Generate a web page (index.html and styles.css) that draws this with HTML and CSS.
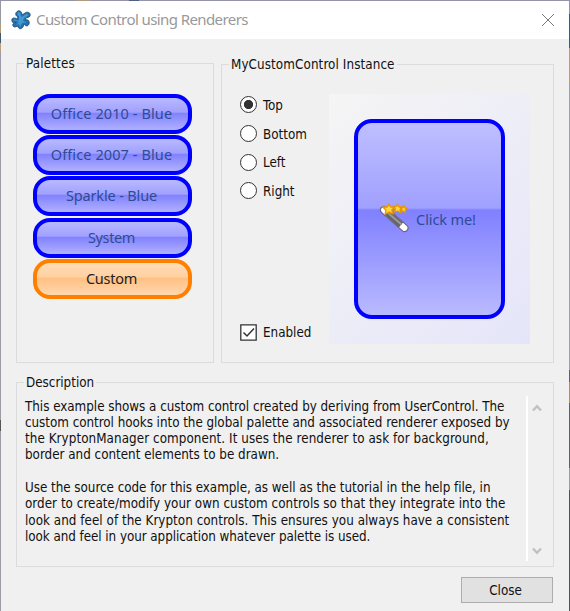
FILE: index.html
```html
<!DOCTYPE html>
<html lang="en">
<head>
<meta charset="utf-8">
<title>Custom Control using Renderers</title>
<link rel="stylesheet" href="styles.css">
</head>
<body>
<div class="desktop">
<main class="window">
  <header class="titlebar">
    <svg class="logo" width="22" height="22" viewBox="0 0 22 22">
      <g transform="translate(1 1)" fill="#2472ae" stroke="#1c4a72" stroke-width=".8" stroke-linejoin="round">
        <path d="M1 11C0 8 3 7 6 9L7 7C4 6 4 2 7 1C10 0 11 3 11 5L14 3C17 1 20 3 19 6C18 8 16 7 15 8L14 10C17 9 19 11 18 14C17 17 14 16 13 14L12 17C10 20 7 19 7 16L4 17C1 17 1 13 4 13L5 12C3 13 1 13 1 11Z"/>
        <path d="M2 10C4 8 6 12 8 10L8 6C6 5 6 2 8 2C10 3 9 6 11 7L15 4L18 5L13 8L12 11L16 12L11 13L9 17L8 14L5 15L8 12Z" fill="#4399d3" stroke="none"/>
      </g>
    </svg>
    <h1 class="title">Custom Control using Renderers</h1>
    <svg class="close-icon" width="14" height="14" viewBox="0 0 14 14"><path d="M1 1L13 13M13 1L1 13" fill="none" stroke="#777" stroke-width="1"/></svg>
  </header>
  <div class="content">
    <div class="top-row">
      <section class="group palettes">
        <h2 class="legend l-pal">Palettes</h2>
        <div class="palette-list">
          <button class="glossy p1"><span>Office 2010 - Blue</span></button>
          <button class="glossy p1"><span>Office 2007 - Blue</span></button>
          <button class="glossy p2"><span>Sparkle - Blue</span></button>
          <button class="glossy p3"><span>System</span></button>
          <button class="glossy orange"><span>Custom</span></button>
        </div>
      </section>
      <section class="group instance">
        <h2 class="legend l-inst">MyCustomControl Instance</h2>
        <div class="instance-body">
          <div class="options">
            <div class="option"><i class="radio on"></i><span>Top</span></div>
            <div class="option"><i class="radio"></i><span>Bottom</span></div>
            <div class="option"><i class="radio"></i><span>Left</span></div>
            <div class="option"><i class="radio"></i><span>Right</span></div>
            <div class="option enabled">
              <svg width="17" height="17" viewBox="0 0 17 17"><path d="M.8 .8H16.2V16.2H.8Z" fill="#fff" stroke="#333" stroke-width="1.3"/><path d="M3.5 8.5L7 12L14 4.5" fill="none" stroke="#333" stroke-width="1.5"/></svg>
              <span>Enabled</span>
            </div>
          </div>
          <div class="stage">
            <button class="glossy big">
              <svg width="32" height="32" viewBox="0 0 32 32">
                <path d="M5 7L25.500 25" stroke="#66667a" stroke-width="8" stroke-linecap="round"/>
                <path d="M5 7L25.500 25" stroke="#fff" stroke-width="5.800" stroke-linecap="round"/>
                <path d="M8 9.600L22 22" stroke="#666" stroke-width="6.400"/>
                <path d="M8.500 9.500L22.500 21.500" stroke="#999" stroke-width="2"/>
                <g fill="#ffd83c" stroke="#e99500" stroke-width="1.300" stroke-linejoin="round">
                  <path d="M10 1L11.700 4L15.500 4.200L12.800 7L14 11L10 9L6 11.300L7 7.200L4 4L8.300 4Z"/>
                  <path d="M18.500 1L20 4L23.500 4L21 6.500L22 10L18.500 8L15.500 9L16.300 6L14 3.500L17.300 3.500Z"/>
                  <path d="M25 2.500L26 5L28.500 5.500L26.500 7L26.500 9.300L24 8L22 8.500L23 6.300L21.500 4.300L24 4.500Z"/>
                </g>
              </svg>
              <span>Click me!</span>
            </button>
          </div>
        </div>
      </section>
    </div>
    <section class="group description">
      <h2 class="legend l-desc">Description</h2>
      <div class="desc-body">
        <div class="prose">
          <p><span class="d1">This example shows a custom control created by deriving from UserControl. The</span><br><span class="d2">custom control hooks into the global palette and associated renderer exposed by</span><br><span class="d3">the KryptonManager component. It uses the renderer to ask for background,</span><br><span class="d4">border and content elements to be drawn.</span></p>
          <p><span class="d5">Use the source code for this example, as well as the tutorial in the help file, in</span><br><span class="d6">order to create/modify your own custom controls so that they integrate into the</span><br><span class="d7">look and feel of the Krypton controls. This ensures you always have a consistent</span><br><span class="d8">look and feel in your application whatever palette is used.</span></p>
        </div>
        <div class="scrollbar">
          <svg width="10" height="8" viewBox="0 0 10 8"><path d="M1 6.500L5 2.200L9 6.500" fill="none" stroke="#c0c0c0" stroke-width="2.400"/></svg>
          <svg width="10" height="8" viewBox="0 0 10 8"><path d="M1 1.500L5 5.800L9 1.500" fill="none" stroke="#c0c0c0" stroke-width="2.400"/></svg>
        </div>
      </div>
    </section>
    <footer class="footer"><button class="close">Close</button></footer>
  </div>
</main>
</div>
</body>
</html>
```
FILE: styles.css
```css
* { box-sizing: border-box; }
body { margin: 0; font: 13.3px/16.3px "DejaVu Sans Condensed", "DejaVu Sans", sans-serif; font-stretch: condensed; color: #111; }
h1, h2, p { margin: 0; font-weight: normal; font-size: inherit; }
button { font: inherit; padding: 0; margin: 0; }
.desktop {
  width: 570px; height: 611px; padding: 1px 1px 0;
  background:
    linear-gradient(90deg, #9494a8 76px, #b29a80 76px 90px, #9494a8 90px 129px, #4b6084 129px 139px, #9494a8 139px) 0 0 / 100% 1px no-repeat,
    linear-gradient(#9494a4 14px, #405878 14px 48px, #b8a07c 48px 83px, #a0a0aa 83px 370px, #606068 370px 382px, #a89070 382px 403px, #606068 403px 468px, #9c9ca4 468px 490px, #505058 490px) 100% 0 / 1px 100% no-repeat,
    linear-gradient(#9898a4 23px, #b09a78 23px 33px, #405868 33px 43px, #b8a07c 43px 51px, #9c9ca8 51px 420px, #555 420px 431px, #9c9ca4 431px);
}
.window { height: 610px; background: #f0f0f0; }
.titlebar { height: 38px; background: #fff; display: flex; align-items: center; padding: 0 14px 0 9px; }
.logo { margin-top: -1px; }
.title { flex: 1; margin: -2px 0 0 4px; font: 15px/20px "Noto Sans", sans-serif; letter-spacing: -0.59px; color: #999; }
.content { padding: 24px 15px 0; }
.top-row { display: flex; gap: 7px; }
.group { border: 1px solid #dcdcdc; }
.legend { width: max-content; height: 18px; line-height: 20px; margin: -10px 0 0 7px; padding: 0 2px; background: #f0f0f0; }
.l-pal { letter-spacing: 0.15px; }
.l-inst { letter-spacing: 0.1px; }
.palettes { width: 198px; height: 300px; }
.palette-list { padding: 21.700px 0 0 16px; display: flex; flex-direction: column; gap: 1.300px; }
.glossy {
  width: 159px; height: 40px; border: 4px solid #00f; border-radius: 17px; color: #2d4c93;
  background: linear-gradient(#c0c0ff, #a0a0ff 46%, #8080ff 47%, #bcbcff);
  background-origin: border-box;
  font: 14.5px/20px "Noto Sans", sans-serif;
  display: flex; align-items: center; justify-content: center; white-space: nowrap;
}
.palette-list span { margin: -2px 2px 0 0; }
.p1 { letter-spacing: 0.1px; }
.p2 { letter-spacing: -0.15px; }
.p3 { letter-spacing: -0.4px; }
.orange { letter-spacing: -0.25px; border-color: #ff8000; color: #222; background-image: linear-gradient(#ffe0c0, #ffd0a0 46%, #ffc080 47%, #ffddbc); }
.instance { width: 333px; height: 299px; margin-top: 1px; }
.instance-body { display: flex; justify-content: space-between; padding: 21px 23px 0 18px; }
.options { display: flex; flex-direction: column; height: 250px; padding-top: 0.5px; }
.option { display: flex; align-items: center; gap: 6px; height: 20px; margin-bottom: 8.800px; }
.option span { padding-top: 3px; }
.radio { width: 17px; height: 17px; border: 1.5px solid #333; border-radius: 50%; background: #fff; }
.on { background: radial-gradient(circle, #333 4.200px, #fff 5px); }
.enabled { margin-top: auto; margin-bottom: 2px; }
.stage { width: 201px; height: 250px; padding: 25px; background: linear-gradient(135deg, #f5f5f5, #e5e5fa); }
.big {
  width: 151px; height: 200px; border-radius: 18px; gap: 5px; padding-right: 4px; letter-spacing: -0.1px;
  background-image: linear-gradient(#c0c0ff, #a0a0ff 44.5%, #8080ff 45.5%, #bcbcff);
}
.big span { margin-top: -1px; }
.description { height: 185px; margin-top: 19px; }
.desc-body { display: flex; justify-content: space-between; padding: 5px 10px 0 8px; }
.prose { padding-top: 2.500px; white-space: nowrap; }
.prose p + p { margin-top: 16.300px; }
.d1 { letter-spacing: -0.02px; }
.d2, .d5 { letter-spacing: -0.03px; }
.d3 { letter-spacing: 0.07px; }
.d6, .d7 { letter-spacing: 0.035px; }
.d8 { letter-spacing: -0.05px; }
.scrollbar { width: 17px; height: 165px; border-left: 2px solid #fff; padding: 8px 0 6px 4px; display: flex; flex-direction: column; justify-content: space-between; }
.footer { display: flex; justify-content: flex-end; padding: 10px 1px 0 0; }
.close { width: 92px; height: 26px; padding: 2px 3px 0 0; border: 1px solid #adadad; background: #e1e1e1; color: #111; }
```
